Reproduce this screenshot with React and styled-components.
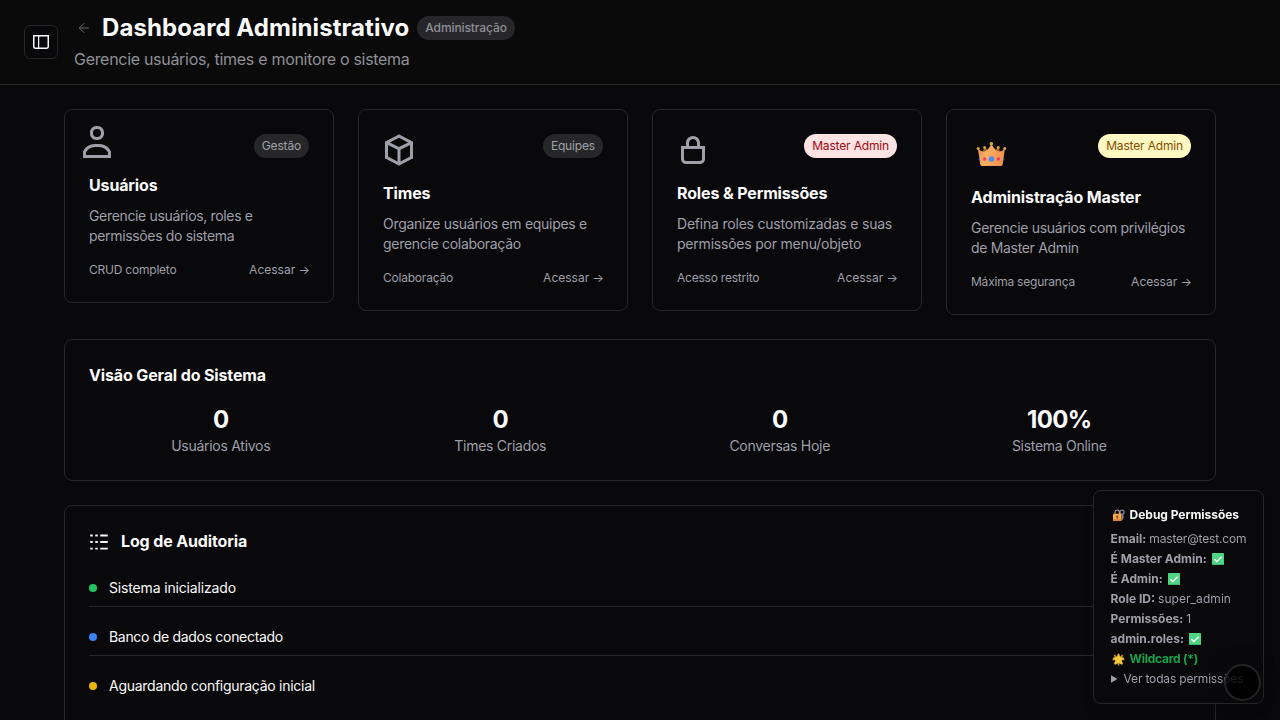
import React from "react";
import styled, { createGlobalStyle } from "styled-components";
import { ArrowLeft } from "lucide-react";

const GlobalStyle = createGlobalStyle`
  *, *::before, *::after { box-sizing: border-box; }
  body {
    margin: 0;
    background: #09090b;
    color: #fafafa;
    font-family: Inter, "Liberation Sans", sans-serif;
    font-size: 16px;
    line-height: 24px;
    overflow: hidden;
  }
  h1, h2, h3, p { margin: 0; }
  svg { display: block; flex-shrink: 0; }
`;

const Page = styled.div`
  height: 100vh;
  overflow: hidden;
`;

const Header = styled.header`
  display: flex;
  align-items: center;
  gap: 16px;
  padding: 12px 24px;
  background: #0a0a0a;
  border-bottom: 1px solid #27272a;
`;

const SidebarButton = styled.button`
  display: flex;
  align-items: center;
  justify-content: center;
  width: 34px;
  height: 34px;
  padding: 0;
  color: #fafafa;
  background: #09090b;
  border: 1px solid #27272a;
  border-radius: 6px;
`;

const Heading = styled.div`
  display: flex;
  flex-direction: column;
  gap: 4px;
`;

const TitleRow = styled.div`
  display: flex;
  align-items: center;
  height: 32px;
`;

const BackLink = styled.span`
  display: flex;
  padding: 0 10px 0 2px;
  color: #67676c;
`;

const Title = styled.h1`
  margin-right: 8px;
  font-size: 24px;
  line-height: 32px;
  font-weight: 700;
  letter-spacing: 0.07px;
`;

const Subtitle = styled.p`
  padding-bottom: 2px;
  line-height: 22px;
  color: #909098;
  letter-spacing: -0.3px;
`;

const tones = {
  neutral: { bg: "#27272a", fg: "#a1a1aa" },
  danger: { bg: "#ffe2e2", fg: "#9f0712" },
  warning: { bg: "#fef9c2", fg: "#894b00" },
};

const Badge = styled.span`
  height: 24px;
  padding: 4px 8px;
  border-radius: 12px;
  font-size: 12px;
  line-height: 16px;
  font-weight: ${(p) => (p.$strong ? 550 : 400)};
  letter-spacing: ${(p) => (p.$strong ? -0.09 : -0.16)}px;
  white-space: nowrap;
  background: ${(p) => tones[p.$tone].bg};
  color: ${(p) => (p.$strong ? "#909098" : tones[p.$tone].fg)};
`;

const Main = styled.main`
  display: flex;
  flex-direction: column;
  gap: 24px;
  padding: 24px 64px;
`;

const CardGrid = styled.div`
  display: grid;
  grid-template-columns: repeat(4, 1fr);
  align-items: start;
  gap: 24px;
`;

const Card = styled.section`
  padding: 24px;
  background: #09090b;
  border: 1px solid #27272a;
  border-radius: 8px;
`;

const CardTop = styled.div`
  display: flex;
  align-items: flex-start;
  justify-content: space-between;
  margin-bottom: 16px;
  color: #9f9fa9;
`;

const RaisedIcon = styled.span`
  margin: -8px 0 0 -8px;
`;

const CardTitle = styled.h3`
  padding-bottom: 2px;
  font-size: 16px;
  line-height: 22px;
  font-weight: 650;
  letter-spacing: -0.14px;
`;

const CardText = styled.p`
  margin: 8px 0 16px;
  font-size: 14px;
  line-height: 20px;
  color: #9f9fa9;
  letter-spacing: ${(p) => p.$track}px;
  white-space: pre-line;
`;

const CardFooter = styled.div`
  display: flex;
  justify-content: space-between;
  font-size: 12px;
  line-height: 16px;
  color: #9f9fa9;
  letter-spacing: -0.22px;
`;

const OpenLink = styled.span`
  margin-right: -1px;
  letter-spacing: 0;
`;

const StatGrid = styled.div`
  display: grid;
  grid-template-columns: repeat(4, 1fr);
  gap: 16px;
  margin-top: 16px;
  text-align: center;
`;

const StatValue = styled.div`
  font-size: 24px;
  line-height: 32px;
  font-weight: 700;
  letter-spacing: -0.7px;
`;

const StatLabel = styled.div`
  font-size: 14px;
  line-height: 20px;
  color: #9f9fa9;
  letter-spacing: -0.28px;
`;

const LogCard = styled(Card)`
  height: 260px;
`;

const LogHeader = styled.div`
  display: flex;
  align-items: center;
  gap: 12px;
  margin-bottom: 16px;
`;

const LogList = styled.div`
  display: flex;
  flex-direction: column;
  gap: 12px;
`;

const LogItem = styled.div`
  display: flex;
  align-items: center;
  gap: 12px;
  padding: 8px 0;
  font-size: 14px;
  line-height: 20px;
  letter-spacing: ${(p) => p.$track}px;
  border-bottom: 1px solid #27272a;
  &:last-child { border-bottom: 0; }
`;

const Dot = styled.span`
  width: 8px;
  height: 8px;
  border-radius: 50%;
  background: ${(p) => p.$color};
`;

const DebugPanel = styled.aside`
  position: fixed;
  right: 16px;
  bottom: 16px;
  width: 171px;
  padding: 16px 16px 16px 16.6px;
  display: flex;
  flex-direction: column;
  gap: 4px;
  background: #09090b;
  border: 1px solid #27272a;
  border-radius: 8px;
  box-shadow: 0 10px 15px -3px rgba(0, 0, 0, 0.1);
  font-size: 12px;
  line-height: 16px;
  color: #9f9fa9;
  letter-spacing: -0.17px;
  white-space: nowrap;
`;

const DebugTitle = styled.h2`
  display: flex;
  align-items: center;
  gap: 4px;
  margin-bottom: 4px;
  padding-left: 1px;
  font-size: 12px;
  line-height: 16px;
  font-weight: 700;
  letter-spacing: -0.03px;
  color: #fafafa;
`;

const DebugLine = styled.div`
  display: flex;
  align-items: center;
  gap: ${(p) => (p.$gap ? p.$gap : 3)}px;
`;

const Key = styled.strong`
  font-weight: 700;
  letter-spacing: 0;
`;

const RoleName = styled.span`
  letter-spacing: 0.06px;
`;

const Wildcard = styled(DebugLine)`
  padding-left: 1px;
  gap: 5px;
  font-weight: 700;
  letter-spacing: -0.25px;
  color: #16a34a;
`;

const FloatingButton = styled.div`
  position: fixed;
  right: 19px;
  bottom: 19px;
  width: 37px;
  height: 37px;
  border: 2px solid #232325;
  border-radius: 50%;
  background: rgba(0, 0, 0, 0.84);
  background-clip: padding-box;
  box-shadow: 0 0 20px rgba(0, 0, 0, 0.3);
`;

const Glyph = ({ d, size = 16 }) => (
  <svg width={size} height={size} viewBox="0 0 16 16" fill="currentColor">
    <path fillRule="evenodd" clipRule="evenodd" d={d} />
  </svg>
);

const paths = {
  sidebar:
    "M6.245 2.5H14.5V12.5C14.5 13.0523 14.0523 13.5 13.5 13.5H6.245V2.5ZM4.995 2.5H1.5V12.5C1.5 13.0523 1.94772 13.5 2.5 13.5H4.995V2.5ZM0 1H1.5H14.5H16V2.5V12.5C16 13.8807 14.8807 15 13.5 15H2.5C1.11929 15 0 13.8807 0 12.5V2.5V1Z",
  user:
    "M7.75 0C5.95507 0 4.5 1.45507 4.5 3.25V3.75C4.5 5.54493 5.95507 7 7.75 7H8.25C10.0449 7 11.5 5.54493 11.5 3.75V3.25C11.5 1.45507 10.0449 0 8.25 0H7.75ZM6 3.25C6 2.2835 6.7835 1.5 7.75 1.5H8.25C9.2165 1.5 10 2.2835 10 3.25V3.75C10 4.7165 9.2165 5.5 8.25 5.5H7.75C6.7835 5.5 6 4.7165 6 3.75V3.25ZM2.5 14.5V13.1709C3.31958 11.5377 4.99308 10.5 6.82945 10.5H9.17055C11.0069 10.5 12.6804 11.5377 13.5 13.1709V14.5H2.5ZM6.82945 9C4.35483 9 2.10604 10.4388 1.06903 12.6857L1 12.8353V13V15.25V16H1.75H14.25H15V15.25V13V12.8353L14.931 12.6857C13.894 10.4388 11.6452 9 9.17055 9H6.82945Z",
  box:
    "M8 0.154663L8.34601 0.334591L14.596 3.58459L15 3.79466V4.25V11.75V12.2053L14.596 12.4154L8.34601 15.6654L8 15.8453L7.65399 15.6654L1.40399 12.4154L1 12.2053V11.75V4.25V3.79466L1.40399 3.58459L7.65399 0.334591L8 0.154663ZM2.5 11.2947V5.44058L7.25 7.81559V13.7647L2.5 11.2947ZM8.75 13.7647L13.5 11.2947V5.44056L8.75 7.81556V13.7647ZM8 1.84534L12.5766 4.22519L7.99998 6.51352L3.42335 4.2252L8 1.84534Z",
  lock:
    "M10 4.5V6H6V4.5C6 3.39543 6.89543 2.5 8 2.5C9.10457 2.5 10 3.39543 10 4.5ZM4.5 6V4.5C4.5 2.567 6.067 1 8 1C9.933 1 11.5 2.567 11.5 4.5V6H12.5H14V7.5V12.5C14 13.8807 12.8807 15 11.5 15H4.5C3.11929 15 2 13.8807 2 12.5V7.5V6H3.5H4.5ZM11.5 7.5H10H6H4.5H3.5V12.5C3.5 13.0523 3.94772 13.5 4.5 13.5H11.5C12.0523 13.5 12.5 13.0523 12.5 12.5V7.5H11.5Z",
  logs:
    "M9 2H15V3.5H9V2ZM9 12.5H15V14H9V12.5ZM9 7.25H15V8.75H9V7.25ZM1 12.5H3V14H1V12.5ZM1 2H3V3.5H1V2ZM1 7.25H3V8.75H1V7.25ZM5 12.5H7V14H5V12.5ZM5 2H7V3.5H5V2ZM5 7.25H7V8.75H5V7.25Z",
};

const Crown = () => (
  <svg width="42" height="36" viewBox="0 0 42 36">
    <defs>
      <linearGradient id="crown" x1="0" y1="0" x2="1" y2="0.2">
        <stop offset="0" stopColor="#e98a55" />
        <stop offset="0.4" stopColor="#f8b063" />
        <stop offset="1" stopColor="#f0914f" />
      </linearGradient>
    </defs>
    <path d="M11.6 18 L13.8 12.5 L17 17 Z M24 17 L27.2 12.5 L29.4 18 Z" fill="#a85f22" />
    <path d="M6.8 14 C9 17.5 13 18.6 15.3 16.6 C17.8 14.6 19.2 12.4 20.4 10 C21.6 12.4 23.2 14.6 25.6 16.6 C28 18.6 31.8 17.5 34 14 L31.6 30.8 Q31.4 32 30 32 H10.9 Q9.5 32 9.3 30.8 Z" fill="url(#crown)" />
    <g fill="#dba63c">
      <circle cx="7.2" cy="14.4" r="1.5" />
      <circle cx="13.6" cy="13.6" r="1.5" />
      <circle cx="20.4" cy="9.8" r="1.8" />
      <circle cx="27.2" cy="13.6" r="1.5" />
      <circle cx="33.7" cy="14.4" r="1.5" />
    </g>
    <circle cx="20.5" cy="25" r="2.8" fill="#4a8cf7" />
    <circle cx="13.7" cy="25" r="1.7" fill="#f23b63" />
    <circle cx="27.3" cy="25" r="1.7" fill="#f23b63" />
    <path d="M8.3 23.5 a1.5 1.7 0 0 0 .4 3.1 Z M32.6 23.5 a1.5 1.7 0 0 1 -.4 3.1 Z" fill="#3f7fe0" />
  </svg>
);

const LockKey = () => (
  <svg width="14" height="14" viewBox="0 0 14 14">
    <circle cx="10" cy="4.2" r="2" fill="none" stroke="#7f748f" strokeWidth="1.5" />
    <path d="M10 6.2h1.3v5l-.8.7-.5-.7z M11.2 8.6h1v1h-1z" fill="#877d98" />
    <path d="M3 6.4V4.2a2.2 2.2 0 0 1 4.4 0v2.2" fill="none" stroke="#b5a29c" strokeWidth="1.1" />
    <rect x="1" y="5.8" width="8.6" height="7.2" rx="1.1" fill="#f2a74a" />
    <path d="M1 11.2h8.6v.8q0 1-1 1H2q-1 0-1-1z" fill="#e07f35" />
    <circle cx="5.2" cy="8.5" r="1" fill="#6b4022" />
    <path d="M4.8 8.8h.9v2.2h-.9z" fill="#6b4022" />
  </svg>
);

const Check = () => (
  <svg width="12" height="12" viewBox="0 0 12 12">
    <rect width="12" height="12" rx="0.6" fill="#4fd483" />
    <path d="M0 11.4h12v.6H0z" fill="#2fa565" />
    <path d="M2.4 6.2l2.4 2.4 4.9-4.9" fill="none" stroke="#fff" strokeWidth="1.4" />
  </svg>
);

const Star = () => (
  <svg width="13" height="13" viewBox="0 0 13 13">
    <path d="M6.5 0.5v12M0.5 6.5h12M2.2 2.2l8.6 8.6M10.8 2.2l-8.6 8.6" stroke="#c8902c" strokeWidth="1.7" />
    <path d="M6.5 1.2l1.6 3.3 3.7.5-2.7 2.6.7 3.7-3.3-1.8-3.3 1.8.7-3.7L1.2 5l3.7-.5z" fill="#f6cb3f" stroke="#f6cb3f" strokeWidth="0.8" strokeLinejoin="round" />
  </svg>
);

const Triangle = () => (
  <svg width="7" height="8" viewBox="0 0 7 8">
    <path d="M0 0.3L6.4 4L0 7.7Z" fill="#9f9fa9" />
  </svg>
);

const cards = [
  { icon: <RaisedIcon><Glyph d={paths.user} size={32} /></RaisedIcon>, badge: "Gestão", tone: "neutral", title: "Usuários", text: "Gerencie usuários, roles e\npermissões do sistema", track: -0.34, note: "CRUD completo" },
  { icon: <Glyph d={paths.box} size={32} />, badge: "Equipes", tone: "neutral", title: "Times", text: "Organize usuários em equipes e\ngerencie colaboração", track: -0.3, note: "Colaboração" },
  { icon: <Glyph d={paths.lock} size={32} />, badge: "Master Admin", tone: "danger", title: "Roles & Permissões", text: "Defina roles customizadas e suas\npermissões por menu/objeto", track: -0.21, note: "Acesso restrito" },
  { icon: <Crown />, badge: "Master Admin", tone: "warning", title: "Administração Master", text: "Gerencie usuários com privilégios\nde Master Admin", track: -0.32, note: "Máxima segurança" },
];

const stats = [
  ["0", "Usuários Ativos"],
  ["0", "Times Criados"],
  ["0", "Conversas Hoje"],
  ["100%", "Sistema Online"],
];

const logs = [
  { color: "#22c55e", text: "Sistema inicializado", track: -0.16 },
  { color: "#3b82f6", text: "Banco de dados conectado", track: -0.31 },
  { color: "#eab308", text: "Aguardando configuração inicial", track: -0.27 },
];

export default function App() {
  return (
    <Page>
      <GlobalStyle />
      <Header>
        <SidebarButton aria-label="Menu">
          <Glyph d={paths.sidebar} />
        </SidebarButton>
        <Heading>
          <TitleRow>
            <BackLink><ArrowLeft size={16} strokeWidth={1.5} /></BackLink>
            <Title>Dashboard Administrativo</Title>
            <Badge $tone="neutral" $strong>Administração</Badge>
          </TitleRow>
          <Subtitle>Gerencie usuários, times e monitore o sistema</Subtitle>
        </Heading>
      </Header>
      <Main>
        <CardGrid>
          {cards.map((c) => (
            <Card key={c.title}>
              <CardTop>
                {c.icon}
                <Badge $tone={c.tone}>{c.badge}</Badge>
              </CardTop>
              <CardTitle>{c.title}</CardTitle>
              <CardText $track={c.track}>{c.text}</CardText>
              <CardFooter>
                <span>{c.note}</span>
                <OpenLink>Acessar →</OpenLink>
              </CardFooter>
            </Card>
          ))}
        </CardGrid>
        <Card>
          <CardTitle>Visão Geral do Sistema</CardTitle>
          <StatGrid>
            {stats.map(([value, label]) => (
              <div key={label}>
                <StatValue>{value}</StatValue>
                <StatLabel>{label}</StatLabel>
              </div>
            ))}
          </StatGrid>
        </Card>
        <LogCard>
          <LogHeader>
            <Glyph d={paths.logs} size={20} />
            <CardTitle>Log de Auditoria</CardTitle>
          </LogHeader>
          <LogList>
            {logs.map((l) => (
              <LogItem key={l.text} $track={l.track}>
                <Dot $color={l.color} />
                {l.text}
              </LogItem>
            ))}
          </LogList>
        </LogCard>
      </Main>
      <DebugPanel>
        <DebugTitle><LockKey />Debug Permissões</DebugTitle>
        <DebugLine><Key>Email:</Key>master@test.com</DebugLine>
        <DebugLine $gap={5}><Key>É Master Admin:</Key><Check /></DebugLine>
        <DebugLine $gap={5}><Key>É Admin:</Key><Check /></DebugLine>
        <DebugLine><Key>Role ID:</Key><RoleName>super_admin</RoleName></DebugLine>
        <DebugLine><Key>Permissões:</Key>1</DebugLine>
        <DebugLine $gap={5}><Key>admin.roles:</Key><Check /></DebugLine>
        <Wildcard $gap={5}><Star />Wildcard (*)</Wildcard>
        <DebugLine $gap={6}><Triangle />Ver todas permissões</DebugLine>
      </DebugPanel>
      <FloatingButton />
    </Page>
  );
}
